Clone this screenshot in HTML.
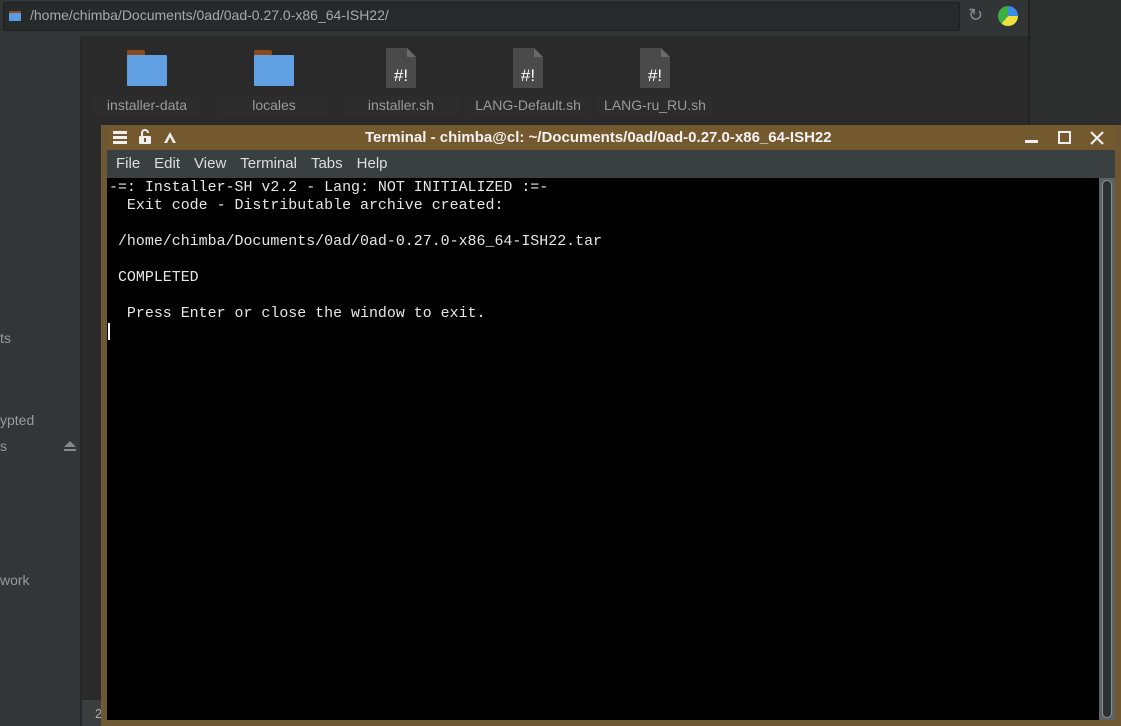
<!DOCTYPE html>
<html><head><meta charset="utf-8"><style>
*{margin:0;padding:0;box-sizing:border-box}
body{width:1121px;height:726px;overflow:hidden;background:#2a2a2a;font-family:"Liberation Sans",sans-serif;position:relative}
.abs{position:absolute}
.lbl{position:absolute;top:94px;height:22px;line-height:22px;font-size:14px;color:#9a9a9a;text-align:center;background:#2c2c2c}
.term{font-family:"Liberation Mono",monospace;font-size:14.95px;color:#e6e6e6;line-height:18px;white-space:pre}
.menu span{margin-right:14px}
</style></head><body>
<!-- top bar -->
<div class="abs" style="left:0;top:0;width:1028px;height:36px;background:#323536"></div>
<div class="abs" style="left:3px;top:2px;width:957px;height:29px;background:#272a2b;border:1px solid #1e2020;border-radius:2px"></div>
<div class="abs" style="left:9px;top:11px;width:12px;height:10px;background:#5a9de0;border-top:2px solid #8a4a20"></div>
<div class="abs" style="left:30px;top:7px;font-size:14px;color:#a8a8a8">/home/chimba/Documents/0ad/0ad-0.27.0-x86_64-ISH22/</div>
<div class="abs" style="left:968px;top:5px;font-size:18px;color:#8a8a8a">↻</div>
<div class="abs" style="left:998px;top:6px;width:20px;height:20px;border-radius:50%;background:conic-gradient(#3b8ee8 0 90deg,#f0e040 90deg 220deg,#3cb043 220deg 360deg)"></div>
<!-- right dark area -->
<div class="abs" style="left:1028px;top:0;width:93px;height:726px;background:#2d2e2e;border-left:2px solid #222"></div>
<!-- sidebar -->
<div class="abs" style="left:0;top:36px;width:80px;height:690px;background:#323636"></div>
<div class="abs" style="left:80px;top:36px;width:2px;height:690px;background:#262828"></div>
<div class="abs" style="left:0;top:330px;font-size:14px;color:#9a9a9a">ts</div>
<div class="abs" style="left:0;top:412px;font-size:14px;color:#9a9a9a">ypted</div>
<div class="abs" style="left:0;top:438px;font-size:14px;color:#9a9a9a">s</div>
<div class="abs" style="left:64px;top:441px;width:0;height:0;border-left:6px solid transparent;border-right:6px solid transparent;border-bottom:6px solid #888"></div>
<div class="abs" style="left:64px;top:449px;width:12px;height:2px;background:#888"></div>
<div class="abs" style="left:0;top:572px;font-size:14px;color:#9a9a9a">work</div>
<div class="abs" style="left:82px;top:700px;width:20px;height:26px;background:#3a3e3e"></div>
<div class="abs" style="left:95px;top:706px;font-size:13px;color:#aaa">2</div>
<!-- icons -->
<div class="abs" style="left:127px;top:50px;width:18px;height:6px;background:#8c4a1c;border-radius:2px 2px 0 0"></div>
<div class="abs" style="left:127px;top:55px;width:40px;height:31px;background:#62a0e4;border-radius:1px"></div>
<div class="abs" style="left:254px;top:50px;width:18px;height:6px;background:#8c4a1c;border-radius:2px 2px 0 0"></div>
<div class="abs" style="left:254px;top:55px;width:40px;height:31px;background:#62a0e4;border-radius:1px"></div>
<svg class="abs" style="left:386px;top:48px" width="30" height="40"><path d="M0 0H21L30 9V40H0Z" fill="#4a4a4a"/><path d="M21 0V9H30Z" fill="#6a6a6a"/><text x="15" y="33" font-size="17" fill="#fff" text-anchor="middle" font-family="Liberation Sans">#!</text></svg>
<svg class="abs" style="left:513px;top:48px" width="30" height="40"><path d="M0 0H21L30 9V40H0Z" fill="#4a4a4a"/><path d="M21 0V9H30Z" fill="#6a6a6a"/><text x="15" y="33" font-size="17" fill="#fff" text-anchor="middle" font-family="Liberation Sans">#!</text></svg>
<svg class="abs" style="left:640px;top:48px" width="30" height="40"><path d="M0 0H21L30 9V40H0Z" fill="#4a4a4a"/><path d="M21 0V9H30Z" fill="#6a6a6a"/><text x="15" y="33" font-size="17" fill="#fff" text-anchor="middle" font-family="Liberation Sans">#!</text></svg>
<div class="lbl" style="left:92px;width:110px">installer-data</div>
<div class="lbl" style="left:218px;width:112px">locales</div>
<div class="lbl" style="left:342px;width:118px">installer.sh</div>
<div class="lbl" style="left:466px;width:124px">LANG-Default.sh</div>
<div class="lbl" style="left:596px;width:118px">LANG-ru_RU.sh</div>
<!-- terminal window -->
<div class="abs" style="left:101px;top:125px;width:1020px;height:601px;background:#6f5733"></div>
<div class="abs" style="left:107px;top:127px;width:1008px;height:22px;background:#74592f"></div>
<div class="abs" style="left:113px;top:131px;width:14px;height:3px;background:#eee;box-shadow:0 5px 0 #eee,0 10px 0 #eee"></div>
<svg class="abs" style="left:138px;top:129px" width="14" height="16"><path d="M4 7V4a3 3 0 0 1 6 0" fill="none" stroke="#eee" stroke-width="2"/><rect x="1" y="7" width="12" height="8" rx="1" fill="#eee"/><rect x="6" y="9" width="2" height="4" fill="#74592f"/></svg>
<svg class="abs" style="left:163px;top:130px" width="14" height="14"><path d="M1 13L7 2L13 13H10L7 7L4 13Z" fill="#eee"/></svg>
<div class="abs" style="left:365px;top:129px;font-size:15px;color:#f2f2f2;font-weight:bold">Terminal - chimba@cl: ~/Documents/0ad/0ad-0.27.0-x86_64-ISH22</div>
<div class="abs" style="left:1025px;top:140px;width:13px;height:3px;background:#eee"></div>
<div class="abs" style="left:1058px;top:131px;width:13px;height:13px;border:2px solid #eee"></div>
<svg class="abs" style="left:1090px;top:131px" width="14" height="14"><path d="M1 1L13 13M13 1L1 13" stroke="#eee" stroke-width="2.2"/></svg>
<div class="abs menu" style="left:107px;top:150px;width:1008px;height:28px;background:#3a3f40;color:#ddd;font-size:15px;line-height:27px;padding-left:9px"><span>File</span><span>Edit</span><span>View</span><span>Terminal</span><span>Tabs</span><span>Help</span></div>
<div class="abs" style="left:107px;top:178px;width:992px;height:542px;background:#000"></div>
<div class="abs" style="left:1099px;top:178px;width:16px;height:542px;background:#5c6264"></div>
<div class="abs" style="left:1102px;top:180px;width:10px;height:538px;background:#2b3032;border:1px solid #8a9092;border-radius:5px"></div>
<div class="abs term" style="left:109px;top:179px">-=: Installer-SH v2.2 - Lang: NOT INITIALIZED :=-
  Exit code - Distributable archive created:

 /home/chimba/Documents/0ad/0ad-0.27.0-x86_64-ISH22.tar

 COMPLETED

  Press Enter or close the window to exit.</div>
<div class="abs" style="left:108px;top:323px;width:2px;height:17px;background:#fff"></div>
</body></html>
